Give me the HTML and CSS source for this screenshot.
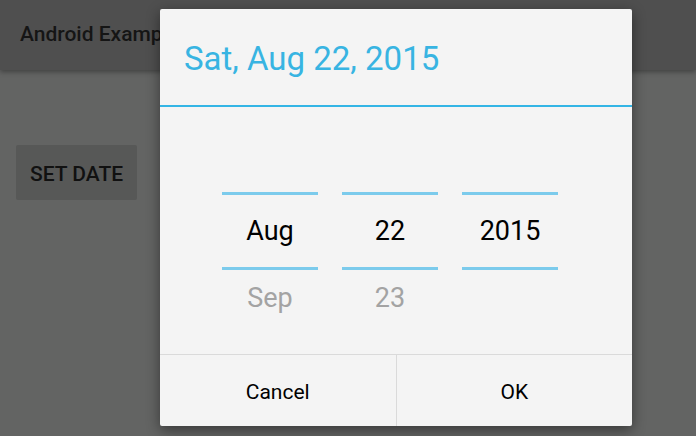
FILE: index.html
```html
<!DOCTYPE html>
<html>
<head>
<meta charset="utf-8">
<link rel="stylesheet" href="styles.css">
</head>
<body>
<div class="screen">
  <header class="appbar"><span class="appbar-title">Android Example</span></header>
  <main class="content">
    <button class="set-date">SET DATE</button>
  </main>
  <div class="dialog">
    <div class="dialog-header">Sat, Aug 22, 2015</div>
    <div class="picker">
      <div class="col">
        <div class="rule"></div>
        <div class="current">Aug</div>
        <div class="rule"></div>
        <div class="next">Sep</div>
      </div>
      <div class="col">
        <div class="rule"></div>
        <div class="current">22</div>
        <div class="rule"></div>
        <div class="next">23</div>
      </div>
      <div class="col">
        <div class="rule"></div>
        <div class="current">2015</div>
        <div class="rule"></div>
        <div class="next"></div>
      </div>
    </div>
    <div class="actions">
      <button class="action">Cancel</button>
      <button class="action">OK</button>
    </div>
  </div>
</div>
</body>
</html>
```
FILE: styles.css
```css
* { box-sizing: border-box; }
html, body { margin: 0; padding: 0; }
body {
  width: 696px;
  height: 436px;
  overflow: hidden;
  background: #636463;
  font-family: Roboto, "Liberation Sans", sans-serif;
}
.screen {
  position: relative;
  width: 696px;
  height: 436px;
}
.appbar {
  height: 70px;
  background: #4f4f4f;
  box-shadow: 0 2px 5px rgba(0,0,0,0.35);
  display: flex;
  align-items: center;
  padding-left: 20px;
  padding-bottom: 2px;
  position: relative;
  z-index: 1;
}
.appbar-title {
  font-size: 21px;
  font-weight: 500;
  color: #151515;
  white-space: nowrap;
}
.content {
  padding: 75px 16px 0;
}
.set-date {
  width: 121px;
  height: 55px;
  border: none;
  border-radius: 2px;
  background: #575857;
  color: #111;
  font-family: Roboto, "Liberation Sans", sans-serif;
  font-size: 21px;
  font-weight: 500;
  padding: 0;
  padding-top: 2px;
}
.dialog {
  position: absolute;
  left: 160px;
  top: 9px;
  width: 472px;
  height: 417px;
  background: #f4f4f4;
  border-radius: 2px;
  box-shadow: 0 4px 14px rgba(0,0,0,0.45);
  display: flex;
  flex-direction: column;
  z-index: 2;
}
.dialog-header {
  height: 98px;
  padding-left: 24px;
  padding-top: 30px;
  font-size: 33px;
  line-height: 39px;
  color: #38b4e2;
  border-bottom: 2px solid #33b5e5;
}
.picker {
  flex: 1;
  display: flex;
  gap: 24px;
  padding-left: 62px;
  padding-top: 85px;
}
.col {
  width: 96px;
  display: flex;
  flex-direction: column;
}
.rule {
  height: 3px;
  background: #7ccbec;
}
.current {
  height: 72px;
  display: flex;
  align-items: center;
  justify-content: center;
  font-size: 27px;
  color: #000;
  padding-bottom: 1px;
}
.next {
  height: 55px;
  display: flex;
  align-items: center;
  justify-content: center;
  font-size: 27px;
  color: #a3a3a3;
}
.actions {
  height: 72px;
  display: flex;
  border-top: 1px solid #dadada;
}
.action {
  flex: 1;
  border: none;
  background: transparent;
  font-family: Roboto, "Liberation Sans", sans-serif;
  font-size: 21px;
  color: #000;
  padding: 0;
  padding-top: 2px;
}
.action + .action {
  border-left: 1px solid #dadada;
}
```
